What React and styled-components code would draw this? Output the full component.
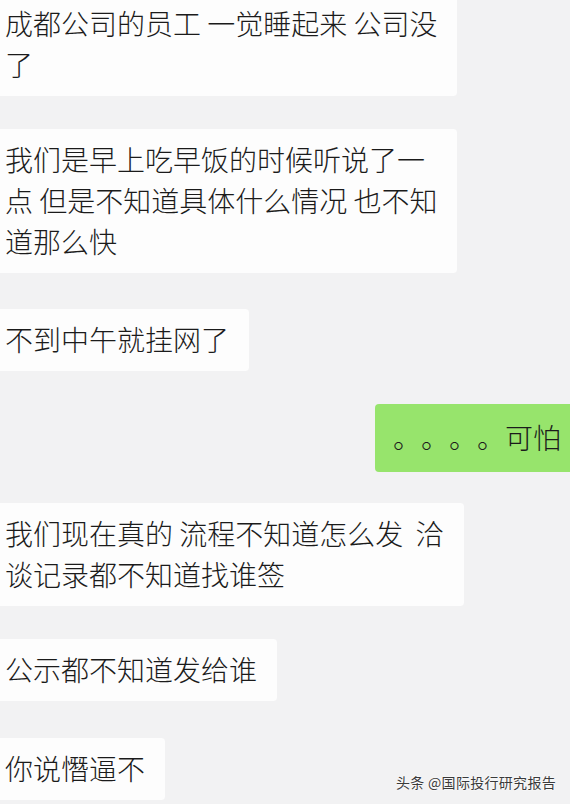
import styled, { createGlobalStyle } from 'styled-components';

const GlobalStyle = createGlobalStyle`
  html, body {
    margin: 0;
    padding: 0;
    background-color: #f2f2f3;
  }
  body {
    width: 570px;
    height: 804px;
    overflow: hidden;
    font-family: "Noto Sans CJK SC", "Noto Sans", sans-serif;
  }
`;

const messages = [
  { lines: ['成都公司的员工 一觉睡起来 公司没', '了'], space: 0 },
  {
    lines: [
      '我们是早上吃早饭的时候听说了一',
      '点 但是不知道具体什么情况 也不知',
      '道那么快',
    ],
    space: 33,
  },
  { lines: ['不到中午就挂网了'], space: 36 },
  { lines: ['。。。。可怕'], space: 33, mine: true },
  { lines: ['我们现在真的 流程不知道怎么发  洽', '谈记录都不知道找谁签'], space: 31 },
  { lines: ['公示都不知道发给谁'], space: 33 },
  { lines: ['你说憯逼不'], space: 37 },
];

export default function App() {
  return (
    <>
      <GlobalStyle />
      <ChatPageStyle>
        <ChatListStyle>
          {messages.map((item, i) => (
            <RowStyle key={i} $mine={item.mine} $space={item.space}>
              <BubbleStyle $mine={item.mine}>
                {item.lines.map((line, j) => (
                  <span key={j}>{line}</span>
                ))}
              </BubbleStyle>
            </RowStyle>
          ))}
        </ChatListStyle>
        <WatermarkStyle>头条 @国际投行研究报告</WatermarkStyle>
      </ChatPageStyle>
    </>
  );
}

const ChatPageStyle = styled.div`
  position: relative;
  width: 570px;
  height: 804px;
  overflow: hidden;
  background-color: #f2f2f3;
`;

const ChatListStyle = styled.div`
  display: flex;
  flex-direction: column;
  margin-top: -7px;
`;

const RowStyle = styled.div`
  display: flex;
  justify-content: ${(p) => (p.$mine ? 'flex-end' : 'flex-start')};
  margin-top: ${(p) => p.$space}px;
`;

const BubbleStyle = styled.div`
  display: flex;
  flex-direction: column;
  padding: ${(p) => (p.$mine ? '13px 9px 14px 18px' : '10px 20px 11px 5px')};
  border-radius: ${(p) => (p.$mine ? '4px 0 0 4px' : '0 4px 4px 0')};
  background-color: ${(p) => (p.$mine ? '#97e46c' : '#fdfdfd')};
  color: #1b1b1b;
  font-size: 28px;
  font-weight: 300;
  line-height: 41px;
  white-space: pre;
  text-spacing-trim: space-all;
  font-feature-settings: "chws" 0, "halt" 0;

  span {
    display: block;
  }
`;

const WatermarkStyle = styled.div`
  position: absolute;
  right: 14px;
  bottom: 12px;
  font-size: 14px;
  color: #3a3a3a;
  letter-spacing: 0.3px;
  text-shadow: 0 0 2px #ffffff, 0 0 2px #ffffff;
`;
